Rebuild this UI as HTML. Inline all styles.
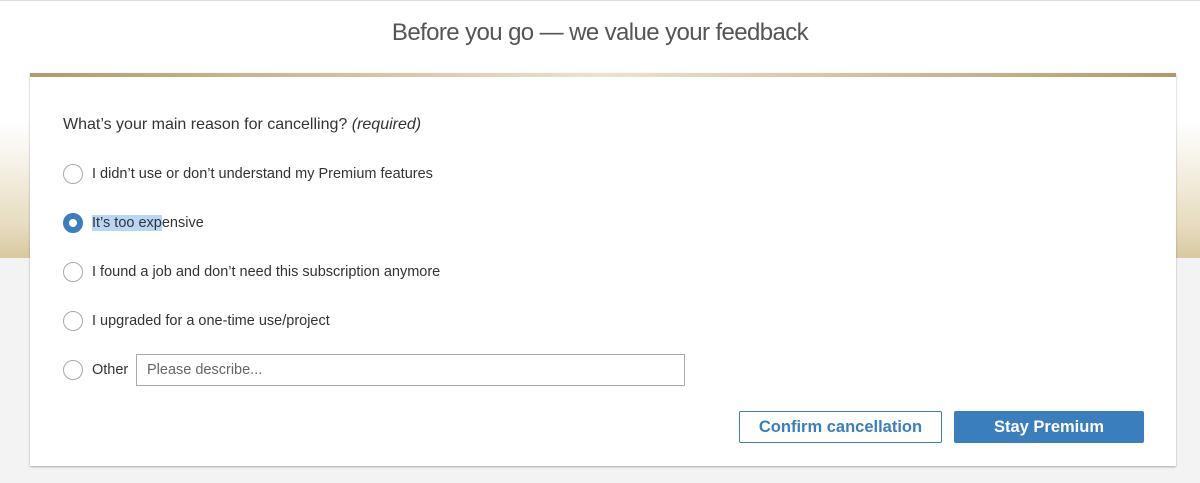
<!DOCTYPE html>
<html><head><style>
html,body{margin:0;padding:0;width:1200px;height:483px;overflow:hidden;font-family:"Liberation Sans",sans-serif;}
body{background:linear-gradient(#fff 0,#fff 120px,#f7f3e9 160px,#e7dcc0 225px,#d8c9a0 258px,#f3f3f3 258px,#f3f3f3 483px);position:relative;}
.topline{position:absolute;left:0;top:0;width:1200px;height:1px;background:#ddd;}
h1{position:absolute;top:19px;left:0;width:1200px;text-align:center;margin:0;font-weight:normal;font-size:24px;color:#555;letter-spacing:-0.6px;}
.card{position:absolute;left:30px;top:73px;width:1146px;height:393px;background:#fff;box-shadow:0 1px 2px rgba(0,0,0,.3);border-top:4px solid #c2ad7f;box-sizing:border-box;}
.card:before{content:"";position:absolute;left:0;right:0;top:-4px;height:4px;background:linear-gradient(90deg,#b09a68,#ebe3cd 50%,#b09a68);}
.q{position:absolute;left:33px;top:39px;font-size:16px;color:#333;}
.opt{position:absolute;left:33px;font-size:14.5px;color:#333;}
.r{position:absolute;left:0;width:20px;height:20px;border:1px solid #aaa;border-radius:50%;box-sizing:border-box;top:-2px;}
.r.on{border:6px solid #3a7ebd;background:#fff;}
.opt span.t{position:absolute;left:29px;top:0;white-space:nowrap;}
.hl{background:#b9d6f7;}
input{position:absolute;left:106px;top:277px;width:549px;height:32px;border:1px solid #aaa;box-sizing:border-box;font-family:"Liberation Sans",sans-serif;font-size:14.5px;padding:0 10px;color:#666;}
.b1{position:absolute;left:709px;top:334px;width:203px;height:32px;border:1px solid #3a7ebd;box-sizing:border-box;color:#3a7ebd;font-weight:bold;font-size:16.5px;text-align:center;line-height:30px;border-radius:2px;}
.b2{position:absolute;left:924px;top:334px;width:190px;height:32px;background:#3a7ebd;color:#fff;font-weight:bold;font-size:16.5px;text-align:center;line-height:32px;border-radius:2px;}
</style></head><body>
<div class="topline"></div>
<h1>Before you go — we value your feedback</h1>
<div class="card">
<div class="q">What’s your main reason for cancelling? <i>(required)</i></div>
<div class="opt" style="top:89px"><div class="r"></div><span class="t">I didn’t use or don’t understand my Premium features</span></div>
<div class="opt" style="top:138px"><div class="r on"></div><span class="t"><span class="hl">It’s too exp</span>ensive</span></div>
<div class="opt" style="top:187px"><div class="r"></div><span class="t">I found a job and don’t need this subscription anymore</span></div>
<div class="opt" style="top:236px"><div class="r"></div><span class="t">I upgraded for a one-time use/project</span></div>
<div class="opt" style="top:285px"><div class="r"></div><span class="t">Other</span></div>
<input value="Please describe...">
<div class="b1">Confirm cancellation</div>
<div class="b2">Stay Premium</div>
</div>
</body></html>
